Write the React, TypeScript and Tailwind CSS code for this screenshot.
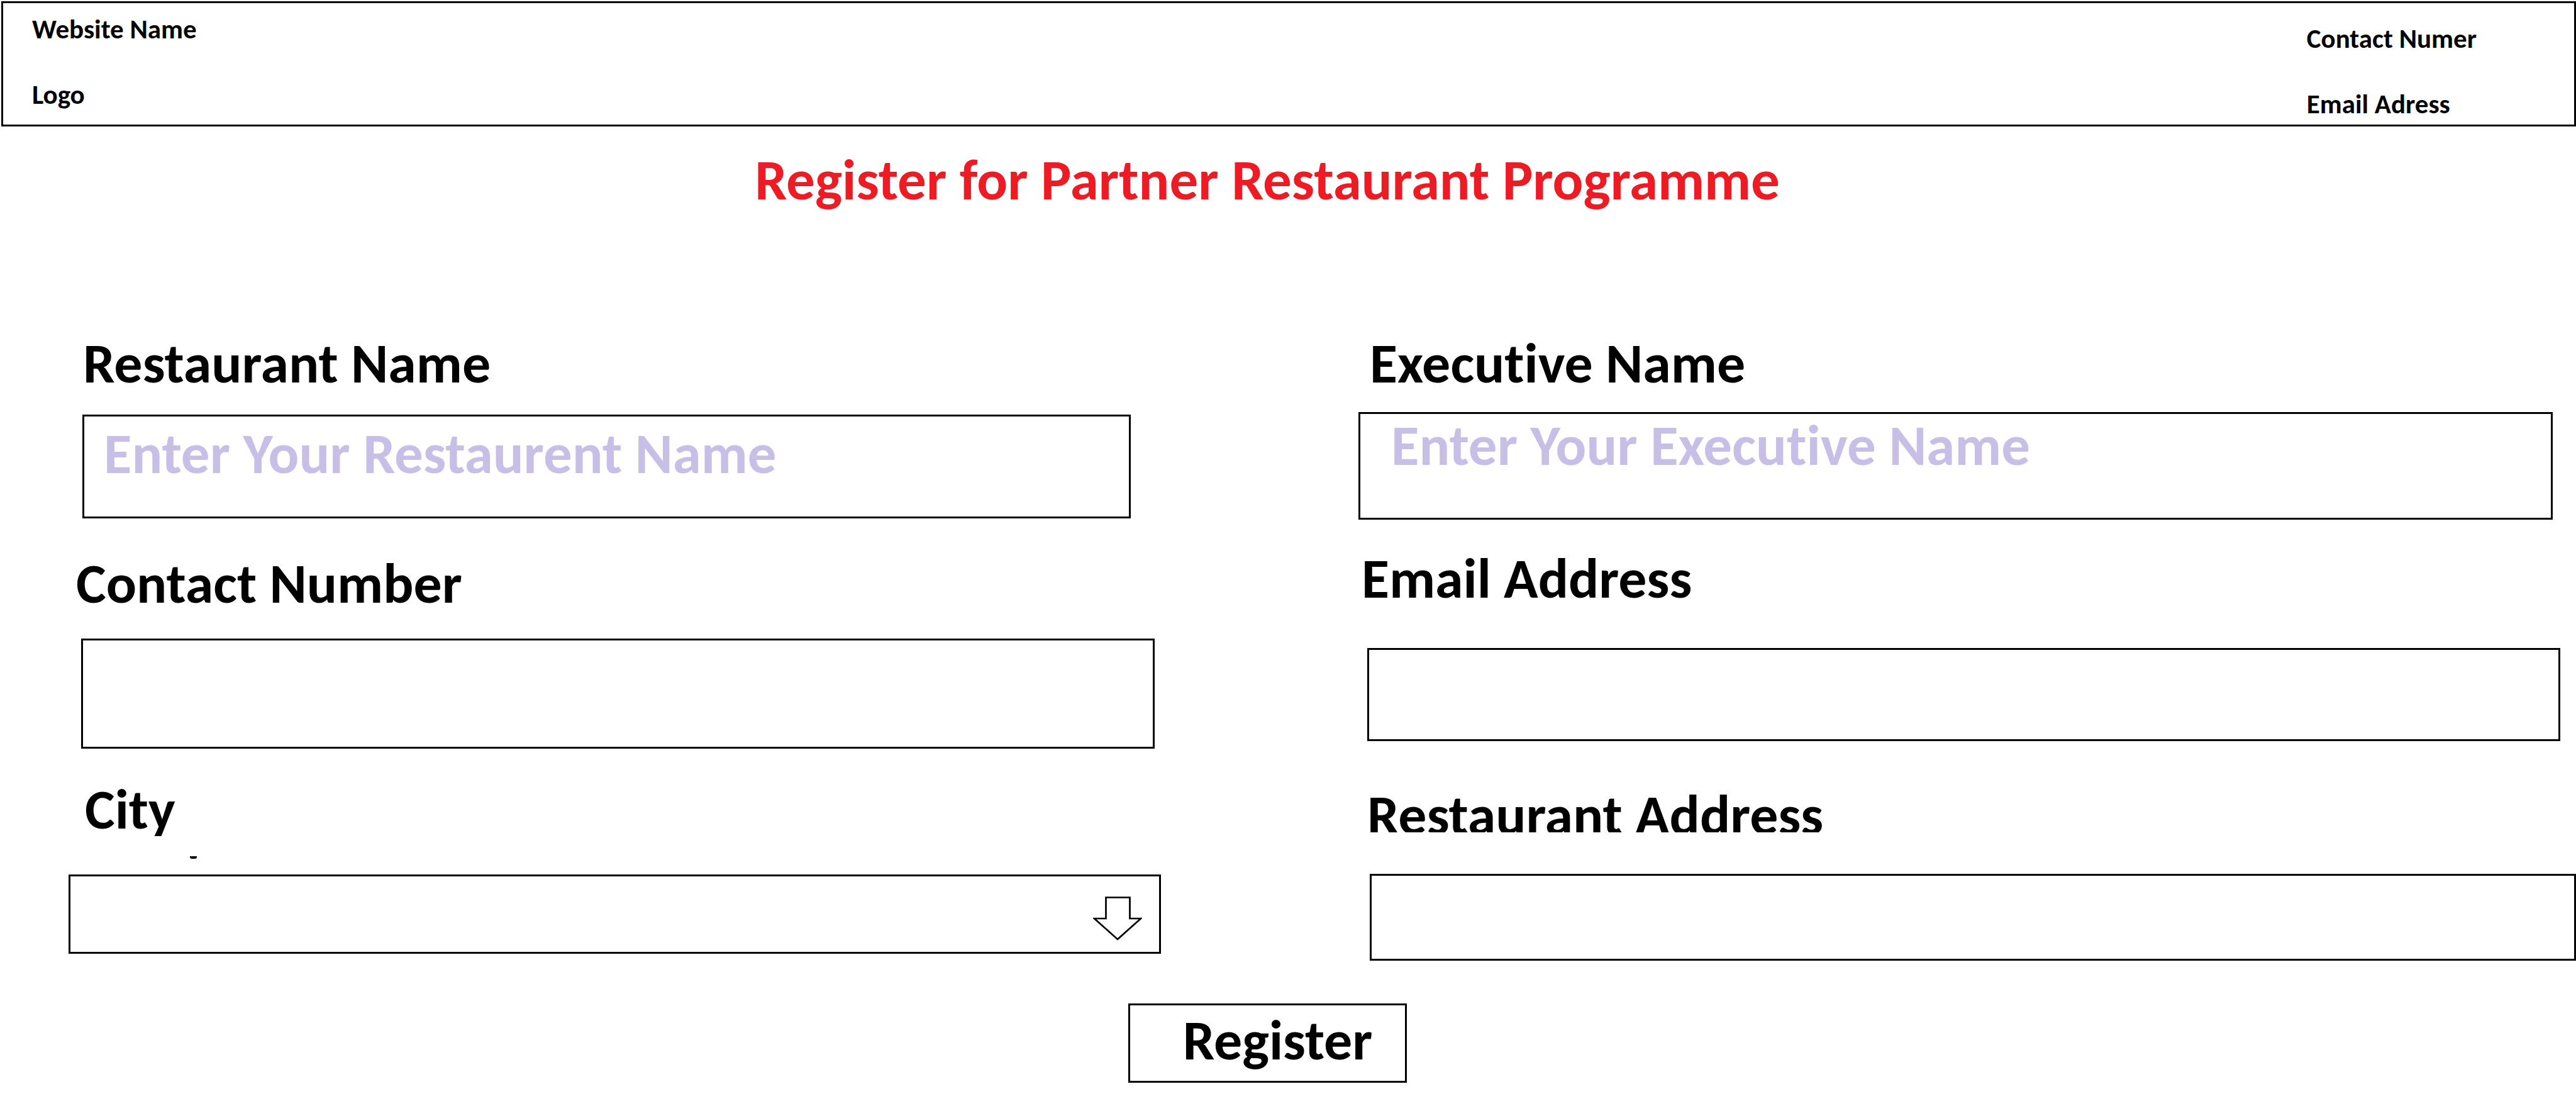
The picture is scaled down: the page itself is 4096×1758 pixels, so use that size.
import React from "react";

const labelText = "text-[90px] leading-[90px] font-bold";
const control =
  "block border-[3px] border-black bg-white text-[91px] leading-[90px] font-bold text-black outline-none placeholder:text-[#c8bfe7] placeholder:opacity-100";

type FieldProps = {
  id: string;
  label: string;
  labelClass: string;
  boxClass: string;
  inputClass: string;
  type?: string;
  placeholder?: string;
};

function Field({ id, label, labelClass, boxClass, inputClass, type = "text", placeholder }: FieldProps) {
  return (
    <div className="flex flex-col">
      <label htmlFor={id} className={`${labelText} ${labelClass}`}>
        {label}
      </label>
      <div className={boxClass}>
        <input id={id} name={id} type={type} placeholder={placeholder} className={`${control} w-full ${inputClass}`} />
      </div>
    </div>
  );
}

function DownArrow() {
  return (
    <svg
      className="pointer-events-none absolute top-[35px] right-[30px] h-[70px] w-[78px]"
      viewBox="0 0 78 70"
      fill="white"
      stroke="black"
      strokeWidth="2.7"
      aria-hidden="true"
    >
      <path d="M20.5 1.5H58.5V35H76L39 68L2 35H20.5Z" />
    </svg>
  );
}

export default function App() {
  return (
    <div className="min-h-screen bg-white font-['Calibri','Carlito','Lato',sans-serif] text-black [font-variant-ligatures:no-common-ligatures]">
      <header className="mt-[2px] ml-[2px] flex justify-between border-[3px] border-black pr-[155px] pb-[6px] pl-[46px] text-[43px] leading-[52px] font-bold">
        <div className="flex flex-col gap-[52px] pt-[16px]">
          <p>Website Name</p>
          <p>Logo</p>
        </div>
        <div className="flex flex-col gap-[52px] pt-[31px]">
          <p>Contact Numer</p>
          <p>Email Adress</p>
        </div>
      </header>

      <main>
        <h1 className="mt-[40px] pr-[66px] text-center text-[91px] leading-[90px] font-bold text-[#ed1c24]">
          Register for Partner Restaurant Programme
        </h1>

        <form className="mt-[201px]" onSubmit={(e) => e.preventDefault()}>
          <div className="grid grid-cols-2">
            <div className="flex flex-col">
              <Field
                id="restaurant-name"
                label="Restaurant Name"
                placeholder="Enter Your Restaurent Name"
                labelClass="ml-[132px]"
                boxClass="mt-[37px] mr-[250px] ml-[131px]"
                inputClass="h-[165px] pb-[42px] pl-[31px]"
              />
              <Field
                id="contact-number"
                label="Contact Number"
                type="tel"
                labelClass="mt-[58px] ml-[121px]"
                boxClass="mt-[43px] mr-[212px] ml-[129px]"
                inputClass="h-[175px] pl-[31px]"
              />
              <div className="flex flex-col">
                <label htmlFor="city" className={`${labelText} mt-[51px] ml-[135px] h-[88px] overflow-hidden`}>
                  City
                </label>
                <span className="mt-[32px] ml-[302px] h-[4px] w-[11px] rounded-b-[3px] bg-black" />
                <div className="relative mt-[25px] mr-[202px] ml-[109px]">
                  <select id="city" name="city" className={`${control} h-[126px] w-full appearance-none pl-[31px]`}>
                    <option value=""></option>
                  </select>
                  <DownArrow />
                </div>
              </div>
            </div>

            <div className="flex flex-col">
              <Field
                id="executive-name"
                label="Executive Name"
                placeholder="Enter Your Executive Name"
                labelClass="ml-[130px]"
                boxClass="mt-[33px] mr-[37px] ml-[112px]"
                inputClass="h-[171px] pb-[66px] pl-[49px]"
              />
              <Field
                id="email-address"
                label="Email Address"
                type="email"
                labelClass="mt-[48px] ml-[117px]"
                boxClass="mt-[66px] mr-[25px] ml-[126px]"
                inputClass="h-[148px] pl-[31px]"
              />
              <Field
                id="restaurant-address"
                label="Restaurant Address"
                labelClass="mt-[72px] ml-[126px] h-[73px] overflow-hidden"
                boxClass="mt-[66px] ml-[130px]"
                inputClass="h-[138px] pl-[31px]"
              />
            </div>
          </div>

          <div className="mt-[68px] flex justify-center pr-[65px]">
            <button
              type="submit"
              className="h-[126px] w-[443px] border-[3px] border-black bg-white pb-[10px] pl-[32px] text-[90px] leading-[90px] font-bold"
            >
              Register
            </button>
          </div>
        </form>
      </main>
    </div>
  );
}
